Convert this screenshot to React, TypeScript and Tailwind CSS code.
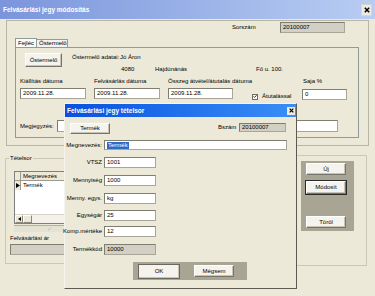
import React from 'react'

function Btn({ children, className = '' }: { children: React.ReactNode; className?: string }) {
    return (
        <div
            className={`flex items-center justify-center bg-[#f4f3ee] border border-t-white border-l-white border-r-[#77756a] border-b-[#77756a] shadow-[inset_-1px_-1px_0_#c7c4b5] text-black ${className}`}
        >
            {children}
        </div>
    )
}

function Field({ value, className = '', gray = false }: { value?: React.ReactNode; className?: string; gray?: boolean }) {
    return (
        <div
            className={`flex items-center pl-[2px] border border-[#a9a698] border-t-[#7f7d70] border-l-[#7f7d70] overflow-hidden whitespace-nowrap ${gray ? 'bg-[#d2cfc4]' : 'bg-white'} ${className}`}
        >
            {value}
        </div>
    )
}

function CloseX({ size = 6 }: { size?: number }) {
    return (
        <svg width={size} height={size} viewBox="0 0 6 6">
            <path d="M0.8 0.8 L5.2 5.2 M5.2 0.8 L0.8 5.2" stroke="#000" strokeWidth="1.5" />
        </svg>
    )
}

function DialogRow({ label, children, className = '' }: { label: string; children: React.ReactNode; className?: string }) {
    return (
        <div className={`flex items-center ${className}`}>
            <div className="w-[37px] flex justify-end whitespace-nowrap">{label}</div>
            <div className="ml-[2px]">{children}</div>
        </div>
    )
}

export default function App() {
    return (
        <div className="w-[375px] h-[296px] bg-[#ece9d8] relative overflow-hidden text-[6px] leading-[7px] text-black font-['Liberation_Sans',Arial,sans-serif]">
            {/* Main window title */}
            <div className="h-[19px] flex items-center bg-linear-to-r from-[#7b95dc] to-[#b9cdf2] pl-[3px] pr-[3px]">
                <span className="text-white font-bold text-[6.5px]">Felvásárlási jegy módosítás</span>
                <div className="ml-auto w-[11px] h-[12px] bg-[#eceae2] border border-[#d8d6cc] flex items-center justify-center">
                    <CloseX size={6} />
                </div>
            </div>

            {/* Header panel */}
            <div className="ml-[6px] mt-[1px] w-[363px] h-[126px] border border-[#b8b5a6]">
                <div className="flex items-center mt-[1px] h-[11px]">
                    <span className="ml-[225px] w-[48px]">Sorszám</span>
                    <Field gray value="20100007" className="w-[65px] h-[11px]" />
                </div>

                {/* Tabs */}
                <div className="ml-[8px] mt-[5px] flex items-end h-[9px]">
                    <div className="h-[9px] w-[22px] px-[2px] flex items-center border border-b-0 border-[#919b9c] bg-[#fbfbf9]">Fejléc</div>
                    <div className="h-[8px] w-[31px] px-[2px] flex items-center border border-l-0 border-b-0 border-[#919b9c] bg-[#f3f2ec]">Őstermelő</div>
                </div>
                <div className="ml-[8px] w-[344px] h-[91px] border border-[#919b9c]">
                    <div className="flex items-start mt-[5px] ml-[9px]">
                        <Btn className="w-[37px] h-[14px]">Őstermelő</Btn>
                        <div className="ml-[10px] flex flex-col">
                            <div className="flex mt-[1px]">
                                <span className="w-[48px]">Őstermelő adatai:</span>
                                <span>Jó Áron</span>
                            </div>
                            <div className="flex mt-[5px] pl-[49px]">
                                <span className="w-[34px]">4080</span>
                                <span className="w-[101px]">Hajdúnánás</span>
                                <span>Fő u. 100.</span>
                            </div>
                        </div>
                    </div>

                    <div className="flex items-start mt-[5px] ml-[4px]">
                        <div className="w-[66px] flex flex-col">
                            <span className="whitespace-nowrap">Kiállítás dátuma</span>
                            <Field value="2009.11.28." className="mt-[3px] h-[11px]" />
                        </div>
                        <div className="ml-[8px] w-[66px] flex flex-col">
                            <span className="whitespace-nowrap">Felvásárlás dátuma</span>
                            <Field value="2009.11.28." className="mt-[3px] h-[11px]" />
                        </div>
                        <div className="ml-[8px] w-[65px] flex flex-col">
                            <span className="whitespace-nowrap">Összeg átvétel/átutalás dátuma</span>
                            <Field value="2009.11.28." className="mt-[3px] h-[11px]" />
                        </div>
                        <div className="ml-[19px] w-[50px] mt-[15px] flex items-center">
                            <div className="w-[6px] h-[6px] bg-white border border-[#6f6d62] flex items-center justify-center">
                                <svg width="5" height="5" viewBox="0 0 5 5">
                                    <path d="M0.6 2.4 L1.9 3.7 L4.4 1" stroke="#111" strokeWidth="1.1" fill="none" />
                                </svg>
                            </div>
                            <span className="ml-[4px] whitespace-nowrap">Átutalással</span>
                        </div>
                        <div className="w-[45px] flex flex-col">
                            <span className="ml-[1px]">Saja %</span>
                            <Field value="0" className="mt-[4px] h-[11px]" />
                        </div>
                    </div>

                    <div className="flex items-center mt-[20px] ml-[4px]">
                        <span className="w-[37px]">Megjegyzés:</span>
                        <Field className="w-[281px] h-[12px]" />
                    </div>
                </div>
            </div>

            {/* Lower section */}
            <div className="flex items-start">
                <div className="relative ml-[5px] mt-[12px] w-[287px] h-[106px] border border-[#cbc8b6]">
                    <span className="absolute -top-[4px] left-[3px] px-[1px] bg-[#ece9d8]">Tételsor</span>
                    <div className="ml-[8px] mt-[12px] w-[230px] h-[53px] border border-[#7f7f7f] bg-white flex flex-col">
                        <div className="h-[9px] flex bg-[#ece9d8] border-b border-[#9d9a8c]">
                            <div className="w-[6px] border-r border-[#9d9a8c]" />
                            <div className="w-[60px] pl-[2px] flex items-center border-r border-[#9d9a8c]">Megnevezés</div>
                        </div>
                        <div className="h-[9px] flex">
                            <div className="w-[6px] flex items-center justify-center bg-[#ece9d8] border-r border-[#9d9a8c]">
                                <svg width="4" height="5" viewBox="0 0 4 5">
                                    <path d="M0 0 L4 2.5 L0 5 Z" fill="#000" />
                                </svg>
                            </div>
                            <div className="pl-[2px] flex items-center">Termék</div>
                        </div>
                        <div className="flex-1" />
                        <div className="h-[9px] flex bg-[#f3f1ea] border-t border-[#d6d3c6]">
                            <div className="w-[8px] flex items-center justify-center bg-[#ece9d8] border border-t-white border-l-white border-r-[#8a887c] border-b-[#8a887c]">
                                <svg width="3" height="4" viewBox="0 0 3 4">
                                    <path d="M3 0 L0 2 L3 4 Z" fill="#000" />
                                </svg>
                            </div>
                            <div className="w-[9px] bg-[#ece9d8] border border-t-white border-l-white border-r-[#8a887c] border-b-[#8a887c]" />
                        </div>
                    </div>
                    <div className="ml-[8px] mt-[1px] w-[230px] h-[7px] bg-[#e4e1d5] border-t border-[#b3b0a1] flex items-center">
                        <span className="ml-[33px] text-[#bdb9a8]">✓</span>
                    </div>
                    <div className="ml-[4px] mt-[3px]">Felvásárlási ár</div>
                    <Field gray className="ml-[4px] mt-[2px] w-[150px] h-[11px]" />
                </div>

                <div className="ml-[4px] mt-[9px] w-[71px] h-[111px] border border-[#cbc8b6]">
                    <div className="ml-[4px] mt-[5px] w-[53px] h-[70px] bg-[#a8a595] flex flex-col">
                        <Btn className="ml-[5px] mt-[2px] w-[40px] h-[12px]">Új</Btn>
                        <Btn className="ml-[5px] mt-[6px] w-[40px] h-[13px] outline outline-1 outline-[#2a2a2a]">Módosít</Btn>
                        <Btn className="ml-[5px] mt-[22px] w-[40px] h-[12px]">Töröl</Btn>
                    </div>
                </div>
            </div>

            {/* Item dialog */}
            <div className="absolute left-[64px] top-[103px] w-[233px] h-[186px] bg-[#ece9d8] border border-t-[#f4f3ee] border-l-[#f4f3ee] border-r-[#5c5a52] border-b-[#5c5a52] flex flex-col">
                <div className="h-[13px] flex items-center bg-linear-to-r from-[#0b4fe0] to-[#3a8ef6] pl-[2px] pr-[1px]">
                    <span className="text-white font-bold text-[6.5px]">Felvásárlási jegy tételsor</span>
                    <div className="ml-auto w-[8px] h-[8px] bg-[#eceae2] flex items-center justify-center">
                        <CloseX size={5} />
                    </div>
                </div>

                <div className="flex items-start mt-[6px]">
                    <Btn className="ml-[5px] w-[40px] h-[11px]">Termék</Btn>
                    <div className="flex items-center ml-[108px]">
                        <span className="w-[21px]">Bszám</span>
                        <Field gray value="20100007" className="w-[47px] h-[9px]" />
                    </div>
                </div>

                <DialogRow label="Megnevezés:" className="mt-[6px]">
                    <Field
                        value={<span className="bg-[#316ac5] text-white px-[1px]">Termék</span>}
                        className="w-[183px] h-[10px]"
                    />
                </DialogRow>
                <DialogRow label="VTSZ" className="mt-[7px]">
                    <Field value="1001" className="w-[52px] h-[11px]" />
                </DialogRow>
                <DialogRow label="Mennyiség" className="mt-[7px]">
                    <Field value="1000" className="w-[52px] h-[11px]" />
                </DialogRow>
                <DialogRow label="Menny. egys." className="mt-[7px]">
                    <Field value="kg" className="w-[52px] h-[11px]" />
                </DialogRow>
                <DialogRow label="Egységár" className="mt-[6px]">
                    <Field value="25" className="w-[52px] h-[11px]" />
                </DialogRow>
                <DialogRow label="Komp.mértéke" className="mt-[5px]">
                    <Field value="12" className="w-[52px] h-[11px]" />
                </DialogRow>
                <DialogRow label="Termékkód" className="mt-[7px]">
                    <Field gray value="10000" className="w-[52px] h-[11px]" />
                </DialogRow>

                <div className="ml-[68px] mt-[7px] w-[114px] h-[18px] bg-[#a8a595] flex items-center">
                    <Btn className="ml-[5px] w-[42px] h-[15px] outline outline-1 outline-[#6b695f] -outline-offset-1">OK</Btn>
                    <Btn className="ml-[14px] w-[40px] h-[12px]">Mégsem</Btn>
                </div>
            </div>
        </div>
    )
}
